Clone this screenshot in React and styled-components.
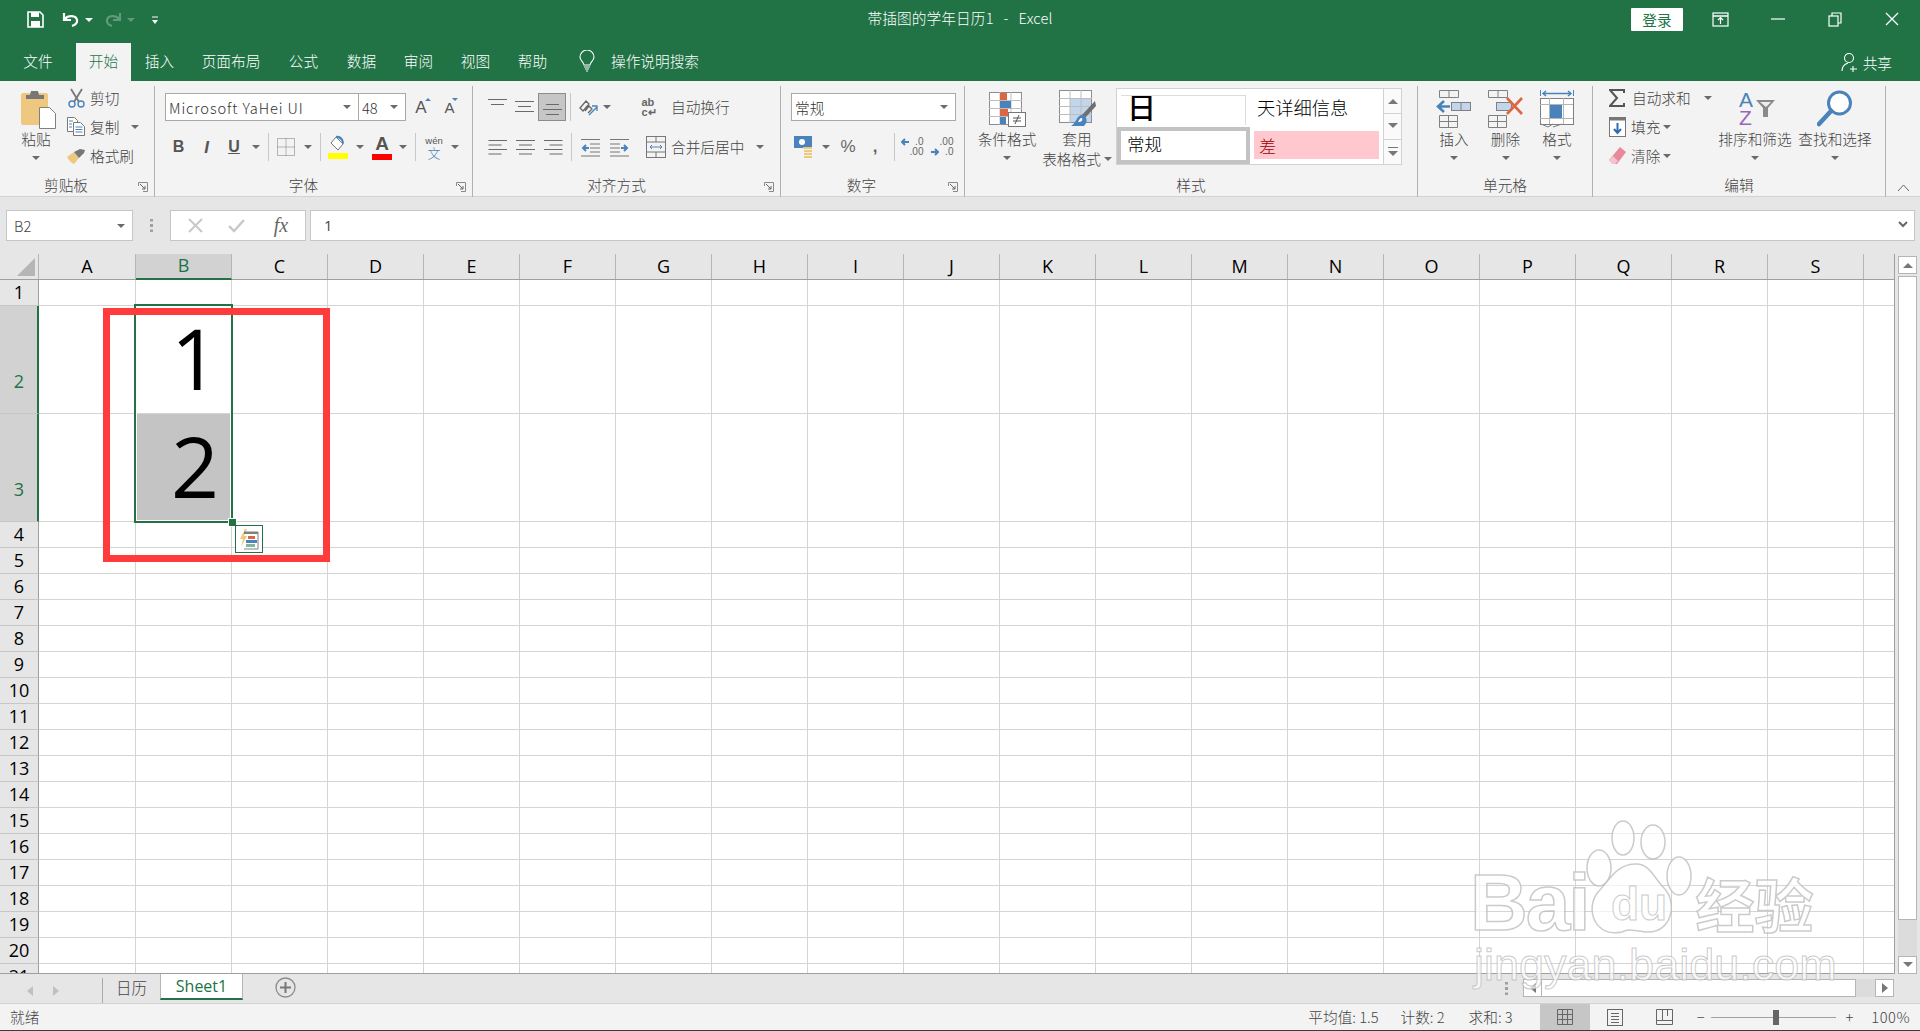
// App.jsx
import React from "react";
import styled, { createGlobalStyle } from "styled-components";

const GREEN = "#217346";
const UI_FONT = '"Noto Sans CJK SC", "Liberation Sans", sans-serif';
const SHEET_FONT = '"Open Sans", "Liberation Sans", sans-serif';

const GlobalStyle = createGlobalStyle`
  html, body {
    margin: 0;
    padding: 0;
    height: 100%;
    overflow: hidden;
    background: #fff;
  }
  * { box-sizing: border-box; }
`;

const Page = styled.div`
  position: relative;
  width: 1920px;
  height: 1031px;
  overflow: hidden;
  display: flex;
  flex-direction: column;
  font-family: ${UI_FONT};
  font-size: 14.67px;
  color: #444;
`;

/* title bar */
const TitleBar = styled.div`
  height: 43px;
  background: ${GREEN};
  display: grid;
  grid-template-columns: 1fr auto 1fr;
  align-items: center;
  color: #fff;
`;
const QuickAccess = styled.div`
  display: flex;
  align-items: center;
  padding-left: 27px;
  padding-bottom: 4px;
`;
const QuickItem = styled.span`
  display: inline-flex;
  align-items: center;
  justify-content: center;
  width: ${(p) => p.$w}px;
  margin-left: ${(p) => p.$ml || 0}px;
`;
const TitleText = styled.div`
  font-size: 14.67px;
  font-weight: 300;
  padding-bottom: 8px;
  white-space: pre;
  letter-spacing: 0.1px;
`;
const WindowControls = styled.div`
  display: flex;
  align-items: center;
  justify-content: flex-end;
  padding-bottom: 5px;
`;
const LoginButton = styled.div`
  width: 52px;
  height: 23px;
  background: #fff;
  color: ${GREEN};
  border-radius: 1px;
  font-size: 14.67px;
  line-height: 23px;
  text-align: center;
  margin-right: 9px;
`;
const WindowButton = styled.div`
  width: 57px;
  display: flex;
  justify-content: center;
`;

/* tabs */
const TabBar = styled.div`
  height: 38px;
  background: ${GREEN};
  display: flex;
  align-items: stretch;
  color: #fff;
`;
const Tab = styled.div`
  width: ${(p) => p.$w}px;
  display: flex;
  align-items: center;
  justify-content: center;
  padding-bottom: 3px;
  font-weight: 300;
  background: ${(p) => (p.$active ? "#f3f3f3" : "transparent")};
  color: ${(p) => (p.$active ? GREEN : "#fff")};
`;
const TellMe = styled.div`
  display: flex;
  align-items: center;
  margin-left: 18px;
  gap: 16px;
  font-weight: 300;
  padding-bottom: 3px;
`;
const Share = styled.div`
  margin-left: auto;
  margin-right: 28px;
  display: flex;
  align-items: center;
  gap: 5px;
  font-weight: 300;
`;

/* ribbon */
const Ribbon = styled.div`
  height: 116px;
  background: #f3f3f3;
  border-bottom: 1px solid #d2d2d2;
  display: flex;
  position: relative;
`;
const Group = styled.div`
  width: ${(p) => p.$w}px;
  height: 111px;
  margin-top: 5px;
  display: flex;
  flex-direction: column;
  position: relative;
  border-right: 1px solid #b1b1b1;
`;
const GroupBody = styled.div`
  height: 88px;
  display: flex;
  align-items: flex-start;
  padding-left: ${(p) => p.$pl || 0}px;
`;
const GroupFoot = styled.div`
  height: 21px;
  display: flex;
  align-items: center;
`;
const GroupLabel = styled.div`
  flex: 1;
  text-align: center;
  font-weight: 300;
  padding-right: ${(p) => p.$pr || 0}px;
  color: #444;
`;
const Launcher = styled.div`
  width: 10px;
  height: 10px;
  margin: 5px 6px 0 0;
  display: flex;
`;
const BigButton = styled.div`
  width: ${(p) => p.$w}px;
  display: flex;
  flex-direction: column;
  align-items: center;
  padding-top: 3px;
`;
const BigIcon = styled.div`
  height: 40px;
  display: flex;
  align-items: center;
  justify-content: center;
  transform: translateX(${(p) => p.$dx || 0}px);
`;
const BigLabel = styled.div`
  height: 20px;
  line-height: 20px;
  font-weight: 300;
  white-space: nowrap;
  display: flex;
  align-items: center;
  gap: 3px;
`;
const CaretLine = styled.div`
  height: 18px;
  display: flex;
  align-items: center;
`;
const Caret = styled.span`
  display: inline-block;
  width: 0;
  height: 0;
  border-left: 4px solid transparent;
  border-right: 4px solid transparent;
  border-top: 4px solid #6a6a6a;
  flex: none;
  margin-left: ${(p) => p.$ml || 0}px;
`;
const SmallColumn = styled.div`
  width: ${(p) => p.$w}px;
  display: flex;
  flex-direction: column;
  padding-left: ${(p) => p.$pl || 0}px;
  margin-left: ${(p) => p.$ml || 0}px;
  margin-top: -3px;
`;
const SmallRow = styled.div`
  height: 29px;
  display: flex;
  align-items: center;
  white-space: nowrap;
  font-weight: 300;
`;
const SmallIcon = styled.span`
  width: 20px;
  display: inline-flex;
  justify-content: center;
  margin-right: ${(p) => p.$mr ?? 4}px;
`;
const ToolColumn = styled.div`
  display: flex;
  flex-direction: column;
  gap: 12px;
  padding-top: 7px;
`;
const ToolRow = styled.div`
  height: 28px;
  display: flex;
  align-items: center;
  white-space: nowrap;
  font-weight: 300;
`;
const Tool = styled.span`
  width: ${(p) => p.$w}px;
  height: 28px;
  flex: none;
  display: inline-flex;
  align-items: center;
  justify-content: center;
  margin-left: ${(p) => p.$ml || 0}px;
  position: relative;
  background: ${(p) => (p.$active ? "#c6c6c6" : "transparent")};
  border: ${(p) => (p.$active ? "1px solid #8c8c8c" : "none")};
`;
const ToolSep = styled.span`
  width: ${(p) => p.$w}px;
  height: 28px;
  flex: none;
  display: inline-flex;
  justify-content: center;
  &::before {
    content: "";
    width: 1px;
    height: 100%;
    background: #c8c8c8;
  }
`;
const Combo = styled.div`
  width: ${(p) => p.$w}px;
  height: 28px;
  flex: none;
  background: #fff;
  border: 1px solid #a9a9a9;
  ${(p) => (p.$joined ? "border-left: none;" : "")}
  display: flex;
  align-items: center;
  justify-content: space-between;
  padding: 0 7px 0 3px;
  font-weight: 300;
  letter-spacing: ${(p) => p.$ls || 0}px;
  color: #333;
`;
const StyleLetter = styled.span`
  font-family: "Liberation Sans", sans-serif;
  font-size: ${(p) => p.$fs || 16}px;
  font-weight: ${(p) => p.$fw || 700};
  font-style: ${(p) => (p.$italic ? "italic" : "normal")};
  text-decoration: ${(p) => (p.$under ? "underline" : "none")};
  color: ${(p) => p.$color || "#555"};
  line-height: 1;
`;
const GrowMark = styled.span`
  position: absolute;
  top: 5px;
  right: 5px;
  width: 0;
  height: 0;
  border-left: 3px solid transparent;
  border-right: 3px solid transparent;
  ${(p) => (p.$down ? "border-top: 3px solid #4a83bb;" : "border-bottom: 3px solid #4a83bb;")}
`;
const ColorBar = styled.span`
  display: flex;
  flex-direction: column;
  align-items: center;
  gap: 1px;
  &::after {
    content: "";
    width: 20px;
    height: 6px;
    background: ${(p) => p.$color};
  }
`;
const PinyinStack = styled.span`
  display: flex;
  flex-direction: column;
  align-items: center;
  line-height: 11px;
  font-size: 9.5px;
  font-family: "Liberation Sans", sans-serif;
  color: #555;
`;
const PinyinChar = styled.span`
  color: #4a83bb;
  font-size: 13px;
  line-height: 14px;
  font-family: ${UI_FONT};
`;
const PercentMark = styled.span`
  font-family: "Liberation Sans", sans-serif;
  font-size: 17px;
  color: #666;
  font-weight: ${(p) => p.$fw || 400};
`;
const DecimalBox = styled.span`
  display: grid;
  grid-template-columns: 8px auto;
  column-gap: 1px;
  align-items: center;
  font-family: "Liberation Sans", sans-serif;
  font-size: 10px;
  line-height: 10px;
  color: #666;
  text-align: right;
`;
const SortBox = styled.span`
  display: flex;
  align-items: flex-start;
  gap: 3px;
`;
const SortLetters = styled.span`
  display: flex;
  flex-direction: column;
  font-family: "Liberation Sans", sans-serif;
  font-size: 21px;
  line-height: 18px;
  font-weight: 400;
`;
const SortA = styled.span`
  color: #4a83bb;
`;
const SortZ = styled.span`
  color: #9a66b8;
`;
const SortFunnel = styled.span`
  display: flex;
  margin-top: 8px;
`;

/* style gallery */
const Gallery = styled.div`
  width: 286px;
  height: 77px;
  margin: 2px 0 0 4px;
  background: #fff;
  border: 1px solid #d2d2d2;
  display: flex;
`;
const GalleryGrid = styled.div`
  flex: 1;
  display: grid;
  grid-template-columns: 137px 1fr;
  grid-template-rows: 37px 1fr;
`;
const GalleryCell = styled.div`
  overflow: hidden;
  color: #000;
  display: flex;
  align-items: center;
  font-weight: 300;
`;
const HeadingCell = styled(GalleryCell)`
  margin: 6px 8px 1px 4px;
  border-top: 1px solid #dcdcdc;
  border-right: 1px solid #dcdcdc;
  padding: 0 0 8px 6px;
  font-size: 29px;
  line-height: 29px;
  font-weight: 500;
`;
const DetailCell = styled(GalleryCell)`
  padding: 0 0 2px 3px;
  font-size: 18.3px;
`;
const NormalCell = styled(GalleryCell)`
  border: 4px solid #c3c3c3;
  margin: 1px 4px 0 0;
  padding: 0 0 4px 6px;
  font-size: 17.5px;
`;
const BadCell = styled(GalleryCell)`
  background: #ffc7ce;
  color: #9c0006;
  margin: 5px 4px 5px 0;
  padding-left: 5px;
  font-size: 17px;
`;
const GalleryScroll = styled.div`
  width: 18px;
  border-left: 1px solid #d2d2d2;
  display: flex;
  flex-direction: column;
`;
const GalleryStep = styled.div`
  flex: 1;
  display: flex;
  align-items: center;
  justify-content: center;
  border-top: ${(p) => (p.$first ? "none" : "1px solid #d2d2d2")};
  background: #fafafa;
`;
const CollapseButton = styled.div`
  position: absolute;
  right: 10px;
  bottom: 4px;
  display: flex;
`;

/* formula bar */
const FormulaBar = styled.div`
  height: 57px;
  background: #e6e6e6;
  display: flex;
  align-items: flex-start;
  padding: 13px 5px 0 6px;
`;
const NameBox = styled.div`
  width: 127px;
  height: 31px;
  background: #fff;
  border: 1px solid #c6c6c6;
  display: flex;
  align-items: center;
  justify-content: space-between;
  padding: 0 7px;
  font-weight: 300;
  color: #444;
`;
const FormulaDots = styled.div`
  width: 37px;
  height: 31px;
  display: flex;
  align-items: center;
  justify-content: center;
`;
const FormulaActions = styled.div`
  width: 136px;
  height: 31px;
  background: #fff;
  border: 1px solid #c6c6c6;
  display: flex;
  align-items: center;
  justify-content: space-around;
  padding: 0 4px;
`;
const FxMark = styled.span`
  font-family: "Liberation Serif", serif;
  font-style: italic;
  font-size: 20px;
  color: #666;
  margin-left: 3px;
`;
const FormulaInput = styled.div`
  flex: 1;
  height: 31px;
  margin-left: 4px;
  background: #fff;
  border: 1px solid #c6c6c6;
  display: flex;
  align-items: center;
  justify-content: space-between;
  padding: 0 6px 2px 13px;
  color: #444;
  font-family: ${SHEET_FONT};
`;

/* sheet */
const SheetArea = styled.div`
  height: 720px;
  display: flex;
  background: #e6e6e6;
`;
const Sheet = styled.div`
  position: relative;
  width: 1895px;
  height: 720px;
  overflow: hidden;
  background: #fff;
  border-right: 1px solid #9f9f9f;
  border-bottom: 1px solid #9f9f9f;
`;
const HeaderRow = styled.div`
  display: flex;
  height: 26px;
  background: #e6e6e6;
  border-bottom: 1px solid #9f9f9f;
`;
const Corner = styled.div`
  width: 39px;
  flex: none;
  border-right: 1px solid #b5b5b5;
  display: flex;
  align-items: flex-end;
  justify-content: flex-end;
  padding: 0 3px 3px 0;
`;
const ColHead = styled.div`
  width: ${(p) => p.$w}px;
  flex: none;
  height: ${(p) => (p.$active ? 26 : 25)}px;
  display: flex;
  align-items: center;
  justify-content: center;
  padding-bottom: 2px;
  font-family: ${SHEET_FONT};
  font-size: 18px;
  color: ${(p) => (p.$active ? GREEN : "#000")};
  background: ${(p) => (p.$active ? "#d2d2d2" : "transparent")};
  border-right: 1px solid #b5b5b5;
  border-bottom: ${(p) => (p.$active ? `2px solid ${GREEN}` : "none")};
`;
const GridRow = styled.div`
  display: flex;
  height: ${(p) => p.$h}px;
`;
const RowHead = styled.div`
  width: 39px;
  flex: none;
  display: flex;
  align-items: ${(p) => (p.$tall ? "flex-end" : "center")};
  justify-content: center;
  padding-bottom: ${(p) => (p.$tall ? 20 : 2)}px;
  padding-left: ${(p) => (p.$active ? 1 : 0)}px;
  font-family: ${SHEET_FONT};
  font-size: 18px;
  color: ${(p) => (p.$active ? GREEN : "#000")};
  background: ${(p) => (p.$active ? "#d2d2d2" : "#e6e6e6")};
  border-right: ${(p) => (p.$active ? `2px solid ${GREEN}` : "1px solid #9f9f9f")};
  border-bottom: 1px solid #c6c6c6;
`;
const Cell = styled.div`
  width: ${(p) => p.$w}px;
  flex: none;
  border-right: 1px solid #d4d4d4;
  border-bottom: 1px solid #d4d4d4;
  background: ${(p) => p.$bg || "#fff"};
  display: flex;
  align-items: flex-end;
  justify-content: flex-end;
  padding: 0 12px 13px 0;
  font-family: ${SHEET_FONT};
  font-size: 84px;
  font-weight: 500;
  line-height: 84px;
  color: #000;
`;
const Selection = styled.div`
  position: absolute;
  left: 134px;
  top: 50px;
  width: 99px;
  height: 219px;
  border: 2px solid ${GREEN};
  box-shadow: inset 0 0 0 1px #fff;
`;
const FillHandle = styled.div`
  position: absolute;
  left: 228px;
  top: 264px;
  width: 7px;
  height: 7px;
  background: ${GREEN};
  border: 1px solid #fff;
  box-sizing: content-box;
`;
const QuickAnalysis = styled.div`
  position: absolute;
  left: 235px;
  top: 271px;
  width: 28px;
  height: 28px;
  background: #fff;
  border: 1px solid ${GREEN};
  display: flex;
  align-items: center;
  justify-content: center;
`;
const RedFrame = styled.div`
  position: absolute;
  left: 103px;
  top: 54px;
  width: 227px;
  height: 254px;
  border: 7px solid #ff3b3b;
`;
const VScroll = styled.div`
  flex: 1;
  display: flex;
  flex-direction: column;
  padding: 2px 3px 0 3px;
`;
const VButton = styled.div`
  height: 18px;
  flex: none;
  background: #fff;
  border: 1px solid #b5b5b5;
  display: flex;
  align-items: center;
  justify-content: center;
`;
const VThumb = styled.div`
  height: 644px;
  margin-top: 2px;
  flex: none;
  background: #fff;
  border: 1px solid #b5b5b5;
`;
const VTrack = styled.div`
  flex: 1;
  background: #dcdcdc;
`;

/* sheet tabs */
const SheetTabs = styled.div`
  height: 29px;
  background: #e6e6e6;
  display: flex;
  align-items: flex-start;
`;
const TabNav = styled.div`
  width: 103px;
  height: 26px;
  margin-top: 4px;
  border-right: 1px solid #a9a9a9;
  display: flex;
  align-items: center;
  padding-left: 27px;
  gap: 20px;
`;
const SheetName = styled.div`
  height: 26px;
  display: flex;
  align-items: center;
  justify-content: center;
  width: ${(p) => p.$w}px;
  font-family: "Open Sans", "Noto Sans CJK SC", sans-serif;
  color: ${(p) => (p.$active ? GREEN : "#444")};
  background: ${(p) => (p.$active ? "#fff" : "transparent")};
  border-bottom: ${(p) => (p.$active ? `2px solid ${GREEN}` : "none")};
  border-left: ${(p) => (p.$active ? "1px solid #b5b5b5" : "none")};
  border-right: ${(p) => (p.$active ? "1px solid #b5b5b5" : "none")};
  font-weight: ${(p) => (p.$active ? 500 : 300)};
  font-size: ${(p) => (p.$active ? 16 : 15.5)}px;
`;
const AddSheet = styled.div`
  margin-left: 32px;
  margin-top: 3px;
  display: flex;
`;
const HScroll = styled.div`
  margin-left: auto;
  margin-right: 26px;
  margin-top: 5px;
  width: 414px;
  height: 18px;
  display: flex;
  align-items: center;
`;
const HDots = styled.div`
  width: 43px;
  display: flex;
  justify-content: flex-end;
  padding-right: 15px;
`;
const HButton = styled.div`
  width: 19px;
  height: 18px;
  flex: none;
  background: #fff;
  border: 1px solid #b5b5b5;
  display: flex;
  align-items: center;
  justify-content: center;
`;
const HThumb = styled.div`
  width: 314px;
  height: 18px;
  flex: none;
  background: #fff;
  border: 1px solid #b5b5b5;
  border-left: none;
`;
const HTrack = styled.div`
  flex: 1;
  height: 18px;
  background: #dcdcdc;
`;

/* status bar */
const StatusBar = styled.div`
  flex: 1;
  background: #f3f3f3;
  border-top: 1px solid #d2d2d2;
  border-bottom: 1px solid #3c3c3c;
  display: flex;
  align-items: center;
  padding-left: 10px;
  font-weight: 300;
`;
const StatusText = styled.span`
  margin-left: ${(p) => p.$ml || 0}px;
  white-space: nowrap;
  letter-spacing: ${(p) => p.$ls || 0}px;
  padding-bottom: 2px;
`;
const ViewButtons = styled.div`
  display: flex;
  height: 100%;
  margin-left: 27px;
`;
const ViewButton = styled.div`
  width: 50px;
  height: 100%;
  display: flex;
  align-items: center;
  justify-content: center;
  background: ${(p) => (p.$active ? "#c6c6c6" : "transparent")};
`;
const ZoomSlider = styled.div`
  width: 125px;
  height: 1px;
  margin: 0 5px 0 6px;
  background: #a0a0a0;
  position: relative;
`;
const ZoomThumb = styled.div`
  position: absolute;
  left: 62px;
  top: -7px;
  width: 6px;
  height: 15px;
  background: #666;
`;

/* watermark */
const Watermark = styled.div`
  position: absolute;
  left: 1470px;
  top: 820px;
  width: 350px;
  height: 175px;
  pointer-events: none;
`;
const WatermarkRow = styled.div`
  display: flex;
  align-items: flex-end;
  height: 118px;
`;
const WatermarkLogo = styled.span`
  font-family: "Liberation Sans", sans-serif;
  font-weight: 700;
  font-size: 80px;
  line-height: 70px;
  letter-spacing: -2px;
  color: rgba(255, 255, 255, 0.7);
  -webkit-text-stroke: 1.5px rgba(185, 185, 185, 0.75);
`;
const WatermarkPaw = styled.span`
  margin-left: -3px;
  display: flex;
`;
const WatermarkCn = styled(WatermarkLogo)`
  font-family: "Noto Sans CJK SC", sans-serif;
  font-size: 59px;
  letter-spacing: 0;
  margin-left: 2px;
`;
const WatermarkUrl = styled.div`
  font-family: "Liberation Sans", sans-serif;
  font-size: 45px;
  line-height: 50px;
  margin-top: 2px;
  padding-left: 4px;
  color: rgba(255, 255, 255, 0.7);
  -webkit-text-stroke: 1px rgba(185, 185, 185, 0.75);
`;

/* icons */
const Svg = ({ w, h, children }) => (
  <svg width={w} height={h} viewBox={`0 0 ${w} ${h}`} fill="none" style={{ display: "block" }}>
    {children}
  </svg>
);
const SaveIcon = () => (
  <Svg w={17} h={17}>
    <path d="M1 1h12l3 3v12H1z" stroke="#fff" strokeWidth="1.6" />
    <rect x="4" y="1" width="8" height="5" fill="#fff" />
    <rect x="4" y="10" width="9" height="6" fill="#fff" />
  </Svg>
);
const UndoIcon = ({ color = "#fff" }) => (
  <Svg w={18} h={17}>
    <path d="M2 2v7h7" stroke={color} strokeWidth="2.2" />
    <path d="M3 8c3-4 11-4 12 1 .6 3-2 5-5 6" stroke={color} strokeWidth="2.2" />
  </Svg>
);
const RedoIcon = ({ color }) => (
  <span style={{ transform: "scaleX(-1)", display: "block" }}>
    <UndoIcon color={color} />
  </span>
);
const CustomizeIcon = () => (
  <Svg w={8} h={8}>
    <path d="M1 1h6" stroke="#fff" />
    <path d="M1 4h6L4 8z" fill="#fff" />
  </Svg>
);
const RibbonDisplayIcon = () => (
  <Svg w={17} h={15}>
    <rect x="1" y="1" width="15" height="13" stroke="#fff" strokeWidth="1.2" />
    <path d="M1 4h15" stroke="#fff" strokeWidth="1.5" />
    <path d="M8.5 12V6M6 8l2.5-2.5L11 8" stroke="#fff" strokeWidth="1.2" />
  </Svg>
);
const MinIcon = () => (
  <Svg w={14} h={14}>
    <path d="M0 7h14" stroke="#fff" strokeWidth="1.2" />
  </Svg>
);
const RestoreIcon = () => (
  <Svg w={14} h={15}>
    <rect x="1" y="4" width="9" height="10" stroke="#fff" strokeWidth="1.2" />
    <path d="M4 4V1h9v10h-3" stroke="#fff" strokeWidth="1.2" />
  </Svg>
);
const CloseIcon = () => (
  <Svg w={14} h={14}>
    <path d="M1 1l12 12M13 1L1 13" stroke="#fff" strokeWidth="1.3" />
  </Svg>
);
const BulbIcon = () => (
  <Svg w={16} h={22}>
    <path d="M5 15c0-3-4-4-4-8a7 7 0 0 1 14 0c0 4-4 5-4 8z" stroke="#fff" strokeWidth="1.1" />
    <path d="M5 17h6M6 19h4M7 21h2" stroke="#fff" strokeWidth="1.2" />
  </Svg>
);
const UserPlusIcon = () => (
  <Svg w={17} h={20}>
    <circle cx="8" cy="6" r="4.5" stroke="#fff" strokeWidth="1.1" />
    <path d="M1 19c0-4 3-7 6-8M12 14v6M9 17h7" stroke="#fff" strokeWidth="1.1" />
  </Svg>
);
const PasteIcon = () => (
  <Svg w={36} h={40}>
    <rect x="1" y="4" width="27" height="32" rx="2" fill="#edc87e" />
    <path d="M6 10V6h4l1-4h7l1 4h5v4z" fill="#777" />
    <path d="M19.5 18.5h10l6 6v15h-16z" fill="#fff" stroke="#808080" />
  </Svg>
);
const ScissorsIcon = () => (
  <Svg w={17} h={20}>
    <path d="M3 1l8 13M14 1L6 14" stroke="#777" strokeWidth="1.8" />
    <circle cx="4" cy="16" r="3" stroke="#4a83bb" strokeWidth="1.4" />
    <circle cx="13" cy="16" r="3" stroke="#4a83bb" strokeWidth="1.4" />
  </Svg>
);
const CopyIcon = () => (
  <Svg w={18} h={19}>
    <path d="M.5.5h7l3 3v11H.5z" fill="#fff" stroke="#777" />
    <path d="M6.5 5.5h7l4 4v9h-11z" fill="#fff" stroke="#777" />
    <path d="M2 4h4M2 7h3M2 10h3M8.500 10h7M8.500 12.500h7M8.500 15h7" stroke="#4a83bb" />
  </Svg>
);
const BrushIcon = () => (
  <Svg w={20} h={16}>
    <path d="M1 9l7-5 5 6-5 6C5 15 3 12 1 9z" fill="#edc87e" />
    <path d="M8 4l6-3 5 1-1 3-5 5z" fill="#777" />
  </Svg>
);
const LauncherIcon = () => (
  <Svg w={10} h={10}>
    <path d="M.5 4V.5h9v9H5" stroke="#8a8a8a" />
    <path d="M2 2l5 5M7 4v3H4" stroke="#666" />
  </Svg>
);
const BorderIcon = () => (
  <Svg w={18} h={18}>
    <path d="M.5.500h17v17H.500zM9 .500v17M.500 9h17" stroke="#777" strokeDasharray="1 1" />
  </Svg>
);
const BucketIcon = () => (
  <Svg w={20} h={17}>
    <path d="M8 2l7 7-5 6-7-7z" fill="#fff" stroke="#777" />
    <path d="M8 1c4-1 8 2 8 8l-2-1c0-3-3-5-6-5z" fill="#4a83bb" />
  </Svg>
);
const AlignIcon = ({ widths, align = "center", offset = 0, gap = 5 }) => (
  <Svg w={19} h={18}>
    {widths.map((l, i) => {
      const x = align === "left" ? 0.5 : align === "right" ? 18.5 - l : 9.5 - l / 2;
      const y = offset + i * gap + 0.5;
      return <path key={i} d={`M${x} ${y}h${l}`} stroke="#6a6a6a" />;
    })}
  </Svg>
);
const OrientIcon = () => (
  <Svg w={22} h={20}>
    <path d="M3 11l6-7 3 3-6 7zM8 14l4-5 3 3-4 4" stroke="#666" strokeWidth="1.3" />
    <path d="M12 18l8-8M15 9h5v5" stroke="#4a83bb" strokeWidth="1.3" />
  </Svg>
);
const IndentIcon = ({ flip }) => (
  <span style={{ display: "block", transform: flip ? "scaleX(-1)" : "none" }}>
    <Svg w={19} h={19}>
      <path d="M0 1.500h19M9 6h10M9 10h10M9 14h10M0 18h19" stroke="#777" />
      <path d="M8 10H2M5 7l-3 3 3 3" stroke="#4a83bb" strokeWidth="2" />
    </Svg>
  </span>
);
const WrapMark = styled.span`
  display: flex;
  flex-direction: column;
  font-family: "Liberation Sans", sans-serif;
  font-size: 11px;
  line-height: 10px;
  font-weight: 700;
  color: #666;
`;
const MergeIcon = () => (
  <Svg w={20} h={22}>
    <rect x=".5" y=".5" width="19" height="21" stroke="#777" />
    <path d="M0 6h20M0 16h20M10 0v6M10 16v6" stroke="#777" />
    <path d="M4 11h12M6 9l-2 2 2 2M14 9l2 2-2 2" stroke="#4a83bb" />
  </Svg>
);
const CurrencyIcon = () => (
  <Svg w={20} h={24}>
    <rect x="1" y="1" width="18" height="12" fill="#4a83bb" />
    <circle cx="9" cy="7" r="3" fill="#fff" />
    <path d="M10 13h9M11 16h8M11 19h8M11 22h8" stroke="#edc87e" strokeWidth="2" />
  </Svg>
);
const ArrowLeftMark = () => (
  <Svg w={8} h={8}>
    <path d="M8 4H1M4 1L1 4l3 3" stroke="#4a83bb" strokeWidth="2" />
  </Svg>
);
const ArrowRightMark = () => (
  <Svg w={8} h={8}>
    <path d="M0 4h7M4 1l3 3-3 3" stroke="#4a83bb" strokeWidth="2" />
  </Svg>
);
const CondFormatIcon = () => (
  <Svg w={37} h={35}>
    <rect x=".5" y=".5" width="32" height="32" fill="#fff" stroke="#8c8c8c" />
    <path d="M0 8.500h33M0 16.500h33M0 24.500h33M11 0v33M22 0v33" stroke="#bdbdbd" />
    <rect x="11" y="1" width="7" height="7" fill="#dc6740" />
    <rect x="11" y="9" width="11" height="7" fill="#4a83bb" />
    <rect x="11" y="17" width="8" height="7" fill="#dc6740" />
    <rect x="11" y="25" width="6" height="7" fill="#4a83bb" />
    <rect x="19.500" y="20.500" width="17" height="14" fill="#fff" stroke="#777" />
    <path d="M24 29h8M24 26h8M30 23l-4 9" stroke="#555" />
  </Svg>
);
const TableFormatIcon = () => (
  <Svg w={37} h={38}>
    <rect x=".5" y=".5" width="32" height="32" fill="#fff" stroke="#8c8c8c" />
    <rect x="11" y="9" width="21" height="23" fill="#c3d5ea" />
    <path d="M0 8.500h33M0 16.500h33M0 24.500h33M11 0v33M22 0v33" stroke="#bdbdbd" />
    <path d="M36 11l-14 15 3 3L37 16z" fill="#6f6f6f" />
    <path d="M22 25c-5 2-4 7-10 11h13c3-3 4-7 0-11z" fill="#4a83bb" />
    <path d="M22 28c-2 1-2 3-3 4 3 0 5-1 4-4z" fill="#fff" />
  </Svg>
);
const InsertIcon = () => (
  <Svg w={36} h={38}>
    <path d="M3.500.5h19v7h-19zM13 .5v7M3.500 25.500h18v12h-18zM12.500 25.500v12M3.500 31.500h18" stroke="#808080" />
    <rect x="15.500" y="12.500" width="19" height="8" fill="#c3d5ea" stroke="#808080" />
    <path d="M25 12v8" stroke="#808080" />
    <path d="M14 16.500H2M8 11l-6 5.500L8 22" stroke="#4a83bb" strokeWidth="2.600" />
  </Svg>
);
const DeleteIcon = () => (
  <Svg w={36} h={38}>
    <path d="M.5.5h19v7H.5zM10 .5v7M.5 25.500h18v12H.5zM9.500 25.500v12M.5 31.500h18" stroke="#808080" />
    <rect x="8.500" y="12.500" width="15" height="8" fill="#c3d5ea" stroke="#808080" />
    <path d="M19 8l15 16M34 8L19 24" stroke="#dc6740" strokeWidth="2.600" />
  </Svg>
);
const FormatIcon = () => (
  <Svg w={34} h={38}>
    <path d="M.5 0v6M33.500 0v6" stroke="#4a83bb" />
    <path d="M3 3.500h28M6 1L3 3.500 6 6M28 1l3 2.500L28 6" stroke="#4a83bb" strokeWidth="1.500" />
    <rect x=".5" y="8.500" width="33" height="26" fill="#fff" stroke="#808080" />
    <path d="M0 14.500h33M0 28.500h33M9.500 8v26M23.500 8v26" stroke="#b5b5b5" />
    <rect x="10" y="15" width="12" height="13" fill="#4a83bb" />
    <path d="M1 34l7 3 5-3M13 37l9-3" stroke="#808080" />
  </Svg>
);
const SigmaIcon = () => (
  <Svg w={16} h={18}>
    <path d="M15 4V1H1l7 8-7 8h14v-3" stroke="#555" strokeWidth="2" />
  </Svg>
);
const FillDownIcon = () => (
  <Svg w={17} h={20}>
    <rect x=".5" y=".5" width="16" height="19" fill="#fff" stroke="#777" />
    <path d="M0 2h17" stroke="#777" strokeWidth="3" />
    <path d="M8.500 6v10M5 12l3.500 4 3.500-4" stroke="#2f6fb0" strokeWidth="2" />
  </Svg>
);
const EraserIcon = () => (
  <Svg w={17} h={17}>
    <path d="M11 0l6 5-9 12-3 0-5-4z" fill="#e98a9b" />
    <path d="M0 13l4-4 5 5-3 3H3z" fill="#f4c4cc" />
  </Svg>
);
const FunnelIcon = () => (
  <Svg w={19} h={18}>
    <path d="M0 1h19l-7 8v9H7V9z" fill="#8a8a8a" />
    <path d="M4 3h11l-5 5z" fill="#eee" />
  </Svg>
);
const FindIcon = () => (
  <Svg w={36} h={38}>
    <circle cx="22.500" cy="13" r="11" fill="#fff" stroke="#4a83bb" strokeWidth="3" />
    <path d="M14 21L2 34" stroke="#4a83bb" strokeWidth="4.500" strokeLinecap="round" />
  </Svg>
);
const XIcon = () => (
  <Svg w={15} h={15}>
    <path d="M1 1l13 13M14 1L1 14" stroke="#c8c8c8" strokeWidth="2" />
  </Svg>
);
const CheckIcon = () => (
  <Svg w={17} h={14}>
    <path d="M1 7l5 5L16 1" stroke="#c8c8c8" strokeWidth="2.400" />
  </Svg>
);
const DotsIcon = () => (
  <Svg w={3} h={13}>
    <path d="M0 1h3M0 6.500h3M0 12h3" stroke="#a0a0a0" strokeWidth="3" />
  </Svg>
);
const ChevronIcon = () => (
  <Svg w={10} h={7}>
    <path d="M1 1l4 4 4-4" stroke="#666" strokeWidth="2" />
  </Svg>
);
const TriUp = () => (
  <Svg w={10} h={6}>
    <path d="M0 6l5-5 5 5z" fill="#777" />
  </Svg>
);
const TriDown = () => (
  <Svg w={10} h={6}>
    <path d="M0 0l5 5 5-5z" fill="#777" />
  </Svg>
);
const TriLeft = ({ color = "#777" }) => (
  <Svg w={6} h={10}>
    <path d="M6 0L0 5l6 5z" fill={color} />
  </Svg>
);
const TriRight = ({ color = "#777" }) => (
  <Svg w={6} h={10}>
    <path d="M0 0l6 5-6 5z" fill={color} />
  </Svg>
);
const MoreIcon = () => (
  <Svg w={10} h={9}>
    <path d="M0 .5h10" stroke="#777" />
    <path d="M0 4l5 5 5-5z" fill="#777" />
  </Svg>
);
const CollapseIcon = () => (
  <Svg w={13} h={8}>
    <path d="M1 7l5.500-6L12 7" stroke="#666" />
  </Svg>
);
const PlusCircle = () => (
  <Svg w={21} h={21}>
    <circle cx="10.500" cy="10.500" r="9.500" stroke="#8c8c8c" strokeWidth="1.300" />
    <path d="M10.500 5v11M5 10.500h11" stroke="#777" strokeWidth="2" />
  </Svg>
);
const CornerMark = () => (
  <Svg w={18} h={18}>
    <path d="M18 0v18H0z" fill="#b5b5b5" />
  </Svg>
);
const QuickAnalysisIcon = () => (
  <Svg w={20} h={22}>
    <path d="M6 1L1 11h3l-2 8 6-11H5l3-7z" fill="#edc87e" />
    <path d="M5 4h14v17H5" stroke="#808080" />
    <path d="M5 5h14" stroke="#808080" strokeWidth="2" />
    <rect x="9" y="8" width="7" height="3" fill="#dc6740" />
    <rect x="7" y="12" width="11" height="3" fill="#4a83bb" />
    <rect x="7" y="16" width="9" height="3" fill="#7fb5a5" />
  </Svg>
);
const GridViewIcon = () => (
  <Svg w={16} h={16}>
    <path d="M.5.500h15v15H.500zM5.500 0v16M10.500 0v16M0 5.500h16M0 10.500h16" stroke="#666" />
  </Svg>
);
const PageViewIcon = () => (
  <Svg w={16} h={17}>
    <rect x=".5" y=".5" width="15" height="16" stroke="#666" />
    <path d="M4 4.500h8M4 7.500h8M4 10.500h8M4 13.500h8" stroke="#666" />
  </Svg>
);
const BreakViewIcon = () => (
  <Svg w={17} h={16}>
    <path d="M.5.500h16v15H.500zM.5 11.500h16M6.500 0v11M11.500 0v7" stroke="#666" />
  </Svg>
);
const PawIcon = () => (
  <Svg w={108} h={118}>
    <g stroke="rgba(185,185,185,.75)" strokeWidth="1.500" fill="rgba(255,255,255,.7)">
      <ellipse cx="37" cy="18" rx="11" ry="17" />
      <ellipse cx="67" cy="22" rx="12" ry="17" />
      <ellipse cx="13" cy="48" rx="12" ry="18" />
      <ellipse cx="93" cy="56" rx="12" ry="19" />
      <path d="M50 44c14 0 18 14 28 24 14 14 8 46-18 44-12-1-16-4-24 0-26 6-38-22-24-40 12-12 18-28 38-28z" />
    </g>
    <text x="53" y="100" textAnchor="middle" fontFamily="Liberation Sans" fontSize="46" fontWeight="700" stroke="rgba(185,185,185,.75)" fill="#fff">du</text>
  </Svg>
);

const COLUMNS = "ABCDEFGHIJKLMNOPQRST".split("");
const columnWidth = (i) => (i === 0 ? 97 : 96);
const ROWS = Array.from({ length: 21 }, (_, i) => i + 1);
const rowHeight = (r) => (r === 2 || r === 3 ? 108 : 26);

const TitleArea = () => (
  <>
    <TitleBar>
      <QuickAccess>
        <SaveIcon />
        <QuickItem $w={18} $ml={18}><UndoIcon /></QuickItem>
        <QuickItem $w={12} $ml={3}><Caret style={{ borderTopColor: "#fff" }} /></QuickItem>
        <QuickItem $w={18} $ml={9}><RedoIcon color="#5f9a7b" /></QuickItem>
        <QuickItem $w={12} $ml={3}><Caret style={{ borderTopColor: "#5f9a7b" }} /></QuickItem>
        <QuickItem $w={8} $ml={14}><CustomizeIcon /></QuickItem>
      </QuickAccess>
      <TitleText>帯插图的学年日历1   -   Excel</TitleText>
      <WindowControls>
        <LoginButton>登录</LoginButton>
        <WindowButton><RibbonDisplayIcon /></WindowButton>
        <WindowButton><MinIcon /></WindowButton>
        <WindowButton><RestoreIcon /></WindowButton>
        <WindowButton><CloseIcon /></WindowButton>
      </WindowControls>
    </TitleBar>
    <TabBar>
      <Tab $w={76}>文件</Tab>
      <Tab $w={55} $active>开始</Tab>
      <Tab $w={57}>插入</Tab>
      <Tab $w={86}>页面布局</Tab>
      <Tab $w={59}>公式</Tab>
      <Tab $w={57}>数据</Tab>
      <Tab $w={57}>审阅</Tab>
      <Tab $w={57}>视图</Tab>
      <Tab $w={57}>帮助</Tab>
      <TellMe>
        <BulbIcon />
        <span>操作说明搜索</span>
      </TellMe>
      <Share>
        <UserPlusIcon />
        <span>共享</span>
      </Share>
    </TabBar>
  </>
);

const ClipboardGroup = () => (
  <Group $w={155}>
    <GroupBody>
      <BigButton $w={72}>
        <BigIcon $dx={2}><PasteIcon /></BigIcon>
        <BigLabel>粘贴</BigLabel>
        <CaretLine><Caret /></CaretLine>
      </BigButton>
      <SmallColumn $w={82} $ml={-6}>
        <SmallRow>
          <SmallIcon><ScissorsIcon /></SmallIcon>
          <span>剪切</span>
        </SmallRow>
        <SmallRow>
          <SmallIcon><CopyIcon /></SmallIcon>
          <span>复制</span>
          <Caret $ml={12} />
        </SmallRow>
        <SmallRow>
          <SmallIcon><BrushIcon /></SmallIcon>
          <span>格式刷</span>
        </SmallRow>
      </SmallColumn>
    </GroupBody>
    <GroupFoot>
      <GroupLabel $pr={6}>剪贴板</GroupLabel>
      <Launcher><LauncherIcon /></Launcher>
    </GroupFoot>
  </Group>
);

const FontGroup = () => (
  <Group $w={318}>
    <GroupBody $pl={10}>
      <ToolColumn>
        <ToolRow>
          <Combo $w={194} $ls={0.9}>
            <span>Microsoft YaHei UI</span>
            <Caret />
          </Combo>
          <Combo $w={47} $joined>
            <span>48</span>
            <Caret />
          </Combo>
          <Tool $w={30}>
            <StyleLetter $fs={17} $fw={400}>A</StyleLetter>
            <GrowMark />
          </Tool>
          <Tool $w={27}>
            <StyleLetter $fs={15} $fw={400}>A</StyleLetter>
            <GrowMark $down />
          </Tool>
        </ToolRow>
        <ToolRow>
          <Tool $w={27}><StyleLetter>B</StyleLetter></Tool>
          <Tool $w={29}><StyleLetter $italic $fs={17}>I</StyleLetter></Tool>
          <Tool $w={26}><StyleLetter $under>U</StyleLetter></Tool>
          <Tool $w={18}><Caret /></Tool>
          <ToolSep $w={6} />
          <Tool $w={30}><BorderIcon /></Tool>
          <Tool $w={14}><Caret /></Tool>
          <ToolSep $w={10} />
          <Tool $w={26}>
            <ColorBar $color="#ffff00"><BucketIcon /></ColorBar>
          </Tool>
          <Tool $w={18}><Caret /></Tool>
          <Tool $w={26}>
            <ColorBar $color="#ff0000">
              <StyleLetter $fs={19} $color="#555">A</StyleLetter>
            </ColorBar>
          </Tool>
          <Tool $w={16}><Caret /></Tool>
          <ToolSep $w={8} />
          <Tool $w={30}>
            <PinyinStack>
              wén
              <PinyinChar>文</PinyinChar>
            </PinyinStack>
          </Tool>
          <Tool $w={12}><Caret /></Tool>
        </ToolRow>
      </ToolColumn>
    </GroupBody>
    <GroupFoot>
      <GroupLabel $pr={4}>字体</GroupLabel>
      <Launcher><LauncherIcon /></Launcher>
    </GroupFoot>
  </Group>
);

const AlignmentGroup = () => (
  <Group $w={308}>
    <GroupBody $pl={11}>
      <ToolColumn>
        <ToolRow>
          <Tool $w={27}><AlignIcon widths={[19, 13]} offset={1} /></Tool>
          <Tool $w={27}><AlignIcon widths={[19, 13, 19]} offset={3} /></Tool>
          <Tool $w={28} $active><AlignIcon widths={[13, 19, 13]} offset={6} /></Tool>
          <ToolSep $w={8} />
          <Tool $w={28}><OrientIcon /></Tool>
          <Tool $w={10}><Caret /></Tool>
          <Tool $w={20} $ml={27}>
            <WrapMark>
              <span>ab</span>
              <span>c↵</span>
            </WrapMark>
          </Tool>
          <StatusText $ml={12}>自动换行</StatusText>
        </ToolRow>
        <ToolRow>
          <Tool $w={27}><AlignIcon widths={[19, 13, 19, 13]} align="left" gap={4.500} offset={2} /></Tool>
          <Tool $w={28}><AlignIcon widths={[19, 13, 19, 13]} gap={4.500} offset={2} /></Tool>
          <Tool $w={28}><AlignIcon widths={[19, 13, 19, 13]} align="right" gap={4.500} offset={2} /></Tool>
          <ToolSep $w={8} />
          <Tool $w={30}><IndentIcon /></Tool>
          <Tool $w={28}><IndentIcon flip /></Tool>
          <Tool $w={20} $ml={13}><MergeIcon /></Tool>
          <StatusText $ml={5}>合并后居中</StatusText>
          <Caret $ml={12} />
        </ToolRow>
      </ToolColumn>
    </GroupBody>
    <GroupFoot>
      <GroupLabel $pr={4}>对齐方式</GroupLabel>
      <Launcher><LauncherIcon /></Launcher>
    </GroupFoot>
  </Group>
);

const NumberGroup = () => (
  <Group $w={184}>
    <GroupBody $pl={10}>
      <ToolColumn>
        <ToolRow>
          <Combo $w={165}>
            <span>常规</span>
            <Caret />
          </Combo>
        </ToolRow>
        <ToolRow>
          <Tool $w={24}><CurrencyIcon /></Tool>
          <Tool $w={22}><Caret /></Tool>
          <Tool $w={22}><PercentMark>%</PercentMark></Tool>
          <Tool $w={32}><PercentMark $fw={700}>,</PercentMark></Tool>
          <ToolSep $w={6} />
          <Tool $w={30}>
            <DecimalBox>
              <ArrowLeftMark />
              <span>.0</span>
              <span />
              <span>.00</span>
            </DecimalBox>
          </Tool>
          <Tool $w={30}>
            <DecimalBox>
              <span />
              <span>.00</span>
              <ArrowRightMark />
              <span>.0</span>
            </DecimalBox>
          </Tool>
        </ToolRow>
      </ToolColumn>
    </GroupBody>
    <GroupFoot>
      <GroupLabel $pr={6}>数字</GroupLabel>
      <Launcher><LauncherIcon /></Launcher>
    </GroupFoot>
  </Group>
);

const StylesGroup = () => (
  <Group $w={453}>
    <GroupBody $pl={7}>
      <BigButton $w={70}>
        <BigIcon><CondFormatIcon /></BigIcon>
        <BigLabel>条件格式</BigLabel>
        <CaretLine><Caret /></CaretLine>
      </BigButton>
      <BigButton $w={70}>
        <BigIcon><TableFormatIcon /></BigIcon>
        <BigLabel>套用</BigLabel>
        <BigLabel>表格格式<Caret /></BigLabel>
      </BigButton>
      <Gallery>
        <GalleryGrid>
          <HeadingCell>日</HeadingCell>
          <DetailCell>天详细信息</DetailCell>
          <NormalCell>常规</NormalCell>
          <BadCell>差</BadCell>
        </GalleryGrid>
        <GalleryScroll>
          <GalleryStep $first><TriUp /></GalleryStep>
          <GalleryStep><TriDown /></GalleryStep>
          <GalleryStep><MoreIcon /></GalleryStep>
        </GalleryScroll>
      </Gallery>
    </GroupBody>
    <GroupFoot>
      <GroupLabel>样式</GroupLabel>
    </GroupFoot>
  </Group>
);

const CellsGroup = () => (
  <Group $w={175}>
    <GroupBody $pl={10}>
      <BigButton $w={52}>
        <BigIcon><InsertIcon /></BigIcon>
        <BigLabel>插入</BigLabel>
        <CaretLine><Caret /></CaretLine>
      </BigButton>
      <BigButton $w={51}>
        <BigIcon><DeleteIcon /></BigIcon>
        <BigLabel>删除</BigLabel>
        <CaretLine><Caret /></CaretLine>
      </BigButton>
      <BigButton $w={52}>
        <BigIcon><FormatIcon /></BigIcon>
        <BigLabel>格式</BigLabel>
        <CaretLine><Caret /></CaretLine>
      </BigButton>
    </GroupBody>
    <GroupFoot>
      <GroupLabel>单元格</GroupLabel>
    </GroupFoot>
  </Group>
);

const EditingGroup = () => (
  <Group $w={293}>
    <GroupBody>
      <SmallColumn $w={124} $pl={14}>
        <SmallRow>
          <SmallIcon $mr={5}><SigmaIcon /></SmallIcon>
          <span>自动求和</span>
          <Caret $ml={13} />
        </SmallRow>
        <SmallRow>
          <SmallIcon $mr={4}><FillDownIcon /></SmallIcon>
          <span>填充</span>
          <Caret $ml={3} />
        </SmallRow>
        <SmallRow>
          <SmallIcon $mr={4}><EraserIcon /></SmallIcon>
          <span>清除</span>
          <Caret $ml={3} />
        </SmallRow>
      </SmallColumn>
      <BigButton $w={76}>
        <BigIcon $dx={2}>
          <SortBox>
            <SortLetters>
              <SortA>A</SortA>
              <SortZ>Z</SortZ>
            </SortLetters>
            <SortFunnel><FunnelIcon /></SortFunnel>
          </SortBox>
        </BigIcon>
        <BigLabel>排序和筛选</BigLabel>
        <CaretLine><Caret /></CaretLine>
      </BigButton>
      <BigButton $w={84}>
        <BigIcon><FindIcon /></BigIcon>
        <BigLabel>查找和选择</BigLabel>
        <CaretLine><Caret /></CaretLine>
      </BigButton>
    </GroupBody>
    <GroupFoot>
      <GroupLabel>编辑</GroupLabel>
    </GroupFoot>
  </Group>
);

const SheetGrid = () => (
  <Sheet>
    <HeaderRow>
      <Corner><CornerMark /></Corner>
      {COLUMNS.map((c, i) => (
        <ColHead key={c} $w={columnWidth(i)} $active={c === "B"}>
          {c === "T" ? "" : c}
        </ColHead>
      ))}
    </HeaderRow>
    {ROWS.map((r) => (
      <GridRow key={r} $h={rowHeight(r)}>
        <RowHead $tall={rowHeight(r) > 26} $active={r === 2 || r === 3}>{r}</RowHead>
        {COLUMNS.map((c, i) => {
          const isB = c === "B";
          return (
            <Cell key={c} $w={columnWidth(i)} $bg={isB && r === 3 ? "#c4c4c4" : undefined}>
              {isB && r === 2 ? "1" : isB && r === 3 ? "2" : ""}
            </Cell>
          );
        })}
      </GridRow>
    ))}
    <Selection />
    <FillHandle />
    <QuickAnalysis><QuickAnalysisIcon /></QuickAnalysis>
    <RedFrame />
  </Sheet>
);

const App = () => (
  <Page>
    <GlobalStyle />
    <TitleArea />
    <Ribbon>
      <ClipboardGroup />
      <FontGroup />
      <AlignmentGroup />
      <NumberGroup />
      <StylesGroup />
      <CellsGroup />
      <EditingGroup />
      <CollapseButton><CollapseIcon /></CollapseButton>
    </Ribbon>
    <FormulaBar>
      <NameBox>
        <span>B2</span>
        <Caret />
      </NameBox>
      <FormulaDots><DotsIcon /></FormulaDots>
      <FormulaActions>
        <XIcon />
        <CheckIcon />
        <FxMark>fx</FxMark>
      </FormulaActions>
      <FormulaInput>
        <span>1</span>
        <ChevronIcon />
      </FormulaInput>
    </FormulaBar>
    <SheetArea>
      <SheetGrid />
      <VScroll>
        <VButton><TriUp /></VButton>
        <VThumb />
        <VTrack />
        <VButton><TriDown /></VButton>
      </VScroll>
    </SheetArea>
    <SheetTabs>
      <TabNav>
        <TriLeft color="#c0c0c0" />
        <TriRight color="#c0c0c0" />
      </TabNav>
      <SheetName $w={57}>日历</SheetName>
      <SheetName $w={83} $active>Sheet1</SheetName>
      <AddSheet><PlusCircle /></AddSheet>
      <HScroll>
        <HDots><DotsIcon /></HDots>
        <HButton><TriLeft /></HButton>
        <HThumb />
        <HTrack />
        <HButton><TriRight /></HButton>
      </HScroll>
    </SheetTabs>
    <StatusBar>
      <StatusText>就绪</StatusText>
      <StatusText $ml={1269}>平均值: 1.5</StatusText>
      <StatusText $ml={22}>计数: 2</StatusText>
      <StatusText $ml={24}>求和: 3</StatusText>
      <ViewButtons>
        <ViewButton $active><GridViewIcon /></ViewButton>
        <ViewButton><PageViewIcon /></ViewButton>
        <ViewButton><BreakViewIcon /></ViewButton>
      </ViewButtons>
      <StatusText $ml={7}>−</StatusText>
      <ZoomSlider><ZoomThumb /></ZoomSlider>
      <StatusText $ml={5}>+</StatusText>
      <StatusText $ml={18} $ls={0.5}>100%</StatusText>
    </StatusBar>
    <Watermark>
      <WatermarkRow>
        <WatermarkLogo>Bai</WatermarkLogo>
        <WatermarkPaw><PawIcon /></WatermarkPaw>
        <WatermarkCn>经验</WatermarkCn>
      </WatermarkRow>
      <WatermarkUrl>jingyan.baidu.com</WatermarkUrl>
    </Watermark>
  </Page>
);

export default App;
